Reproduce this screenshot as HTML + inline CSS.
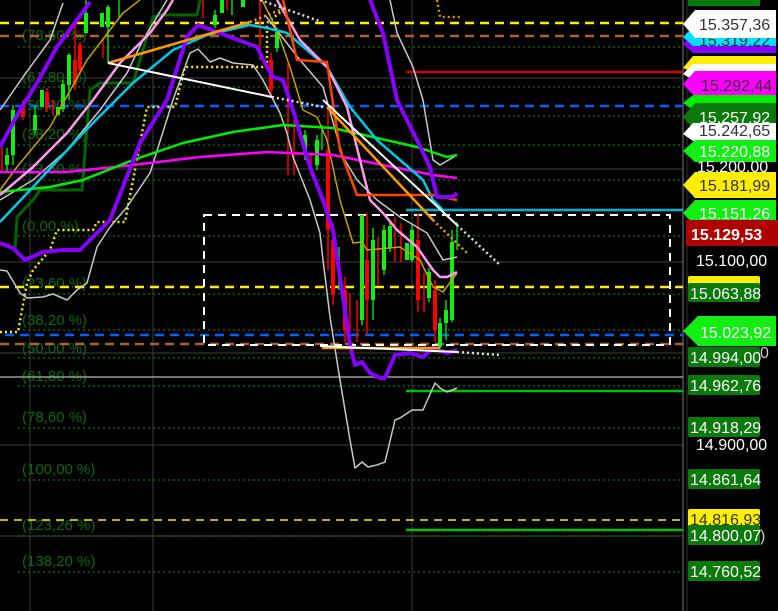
<!DOCTYPE html>
<html><head><meta charset="utf-8"><style>
html,body{margin:0;padding:0;background:#000;}
svg{display:block;font-family:"Liberation Sans",sans-serif;}
</style></head><body>
<svg width="778" height="611" viewBox="0 0 778 611" xmlns="http://www.w3.org/2000/svg">
<rect width="778" height="611" fill="#000"/>
<g stroke="#333" stroke-width="1.2">
<line x1="30" y1="0" x2="30" y2="611"/><line x1="153" y1="0" x2="153" y2="611"/><line x1="412" y1="0" x2="412" y2="611"/>
<line x1="0" y1="78" x2="683" y2="78"/><line x1="0" y1="169" x2="683" y2="169"/><line x1="0" y1="262" x2="683" y2="262"/>
<line x1="0" y1="353" x2="683" y2="353"/><line x1="0" y1="445" x2="683" y2="445"/><line x1="0" y1="536" x2="683" y2="536"/>
</g>
<line x1="683" y1="0" x2="683" y2="611" stroke="#555" stroke-width="1.5"/>
<line x1="687" y1="0" x2="687" y2="611" stroke="#333" stroke-width="1"/>
<g stroke="#0a7a0a" stroke-width="1.2" stroke-dasharray="2,3">
<line x1="18" y1="47" x2="683" y2="47"/><line x1="18" y1="87" x2="683" y2="87"/><line x1="18" y1="116" x2="683" y2="116"/>
<line x1="18" y1="145" x2="683" y2="145"/><line x1="18" y1="180" x2="683" y2="180"/><line x1="18" y1="236" x2="683" y2="236"/>
<line x1="18" y1="294" x2="683" y2="294"/><line x1="18" y1="330" x2="683" y2="330"/><line x1="18" y1="358" x2="683" y2="358"/>
<line x1="18" y1="386" x2="683" y2="386"/><line x1="18" y1="428" x2="683" y2="428"/><line x1="18" y1="480" x2="683" y2="480"/>
<line x1="18" y1="536" x2="683" y2="536"/><line x1="18" y1="572" x2="683" y2="572"/>
</g>
<g fill="#0b6a0b" font-size="15">
<text x="22" y="40">(78,60 %)</text><text x="22" y="82">(61,80 %)</text><text x="22" y="110">(50,00 %)</text>
<text x="22" y="139">(38,20 %)</text><text x="22" y="174">(23,60 %)</text><text x="22" y="231">(0,00 %)</text>
<text x="22" y="288">(23,60 %)</text><text x="22" y="325">(38,20 %)</text><text x="22" y="353">(50,00 %)</text>
<text x="22" y="381">(61,80 %)</text><text x="22" y="422">(78,60 %)</text><text x="22" y="474">(100,00 %)</text>
<text x="22" y="530">(123,26 %)</text><text x="22" y="566">(138,20 %)</text>
</g>
<g stroke-width="2.5" stroke-dasharray="9,6">
<line x1="0" y1="23" x2="683" y2="23" stroke="#ffee00"/>
<line x1="0" y1="36" x2="683" y2="36" stroke="#b0602a"/>
<line x1="0" y1="106" x2="683" y2="106" stroke="#0060ff"/>
<line x1="0" y1="287" x2="683" y2="287" stroke="#ffee00"/>
<line x1="5" y1="335" x2="683" y2="335" stroke="#0060ff"/>
<line x1="0" y1="344" x2="683" y2="344" stroke="#b0602a"/>
</g>
<line x1="0" y1="520" x2="683" y2="520" stroke="#ffee00" stroke-width="1.5" stroke-dasharray="8,6"/>
<line x1="406" y1="72" x2="683" y2="72" stroke="#d00000" stroke-width="2.5"/>
<line x1="0" y1="377" x2="683" y2="377" stroke="#999" stroke-width="1.5"/>
<line x1="406" y1="210" x2="683" y2="210" stroke="#00b0d0" stroke-width="2.5"/>
<line x1="406" y1="391" x2="683" y2="391" stroke="#00c000" stroke-width="2.5"/>
<line x1="406" y1="530" x2="683" y2="530" stroke="#00c000" stroke-width="2.5"/>
<rect x="204" y="215" width="466" height="130" fill="none" stroke="#fff" stroke-width="2" stroke-dasharray="8,6"/>
<g stroke-width="1.5">
<g stroke="#ff0000" fill="#ff0000">
<line x1="2" y1="148" x2="2" y2="172"/><line x1="23" y1="100" x2="23" y2="120"/><line x1="47" y1="88" x2="47" y2="112"/><line x1="53" y1="100" x2="53" y2="115"/>
<line x1="75" y1="20" x2="75" y2="90"/><line x1="80" y1="42" x2="80" y2="75"/><line x1="103" y1="38" x2="103" y2="58"/>
<line x1="203" y1="0" x2="203" y2="18"/><line x1="227" y1="0" x2="227" y2="10"/><line x1="260" y1="0" x2="260" y2="60"/>
<line x1="271" y1="53" x2="271" y2="97"/><line x1="288" y1="63" x2="288" y2="175"/><line x1="294" y1="120" x2="294" y2="175"/><line x1="311" y1="153" x2="311" y2="175"/>
<line x1="328" y1="107" x2="328" y2="270"/><line x1="333" y1="223" x2="333" y2="305"/><line x1="345" y1="277" x2="345" y2="342"/><line x1="350" y1="293" x2="350" y2="332"/>
<line x1="357" y1="300" x2="357" y2="342"/><line x1="367" y1="213" x2="367" y2="335"/><line x1="378" y1="237" x2="378" y2="285"/><line x1="395" y1="217" x2="395" y2="262"/>
<line x1="401" y1="223" x2="401" y2="262"/><line x1="418" y1="213" x2="418" y2="312"/><line x1="424" y1="273" x2="424" y2="312"/><line x1="435" y1="280" x2="435" y2="342"/>
</g>
<g fill="#ff0000">
<rect x="21" y="105" width="4" height="12"/><rect x="45" y="92" width="4" height="16"/><rect x="73" y="60" width="4" height="25"/><rect x="78" y="45" width="4" height="25"/>
<rect x="269" y="60" width="4" height="30"/><rect x="326" y="150" width="4" height="80"/><rect x="331" y="240" width="4" height="55"/><rect x="343" y="290" width="4" height="40"/>
<rect x="365" y="260" width="4" height="40"/><rect x="416" y="240" width="4" height="60"/><rect x="433" y="290" width="4" height="40"/>
</g>
<g stroke="#00dd00">
<line x1="7" y1="148" x2="7" y2="172"/><line x1="13" y1="105" x2="13" y2="165"/><line x1="35" y1="105" x2="35" y2="135"/><line x1="63" y1="80" x2="63" y2="112"/>
<line x1="69" y1="53" x2="69" y2="100"/><line x1="86" y1="0" x2="86" y2="33"/><line x1="108" y1="5" x2="108" y2="63"/><line x1="119" y1="0" x2="119" y2="17"/>
<line x1="215" y1="10" x2="215" y2="28"/><line x1="232" y1="0" x2="232" y2="15"/><line x1="277" y1="28" x2="277" y2="52"/><line x1="305" y1="130" x2="305" y2="160"/>
<line x1="317" y1="135" x2="317" y2="170"/><line x1="322" y1="125" x2="322" y2="150"/><line x1="339" y1="247" x2="339" y2="290"/><line x1="362" y1="215" x2="362" y2="325"/>
<line x1="373" y1="228" x2="373" y2="320"/><line x1="384" y1="225" x2="384" y2="275"/><line x1="390" y1="222" x2="390" y2="252"/><line x1="412" y1="225" x2="412" y2="262"/>
<line x1="429" y1="268" x2="429" y2="302"/><line x1="440" y1="318" x2="440" y2="350"/><line x1="446" y1="300" x2="446" y2="340"/><line x1="452" y1="230" x2="452" y2="322"/><line x1="457" y1="222" x2="457" y2="250"/>
</g>
<g fill="#11ee11">
<rect x="5" y="155" width="4" height="10"/><rect x="11" y="110" width="4" height="45"/><rect x="33" y="115" width="4" height="15"/><rect x="40" y="90" width="4" height="17"/>
<rect x="56" y="107" width="4" height="8"/><rect x="61" y="84" width="4" height="25"/><rect x="67" y="55" width="4" height="30"/><rect x="84" y="13" width="4" height="20"/>
<rect x="100" y="13" width="4" height="14"/><rect x="106" y="7" width="4" height="20"/><rect x="213" y="15" width="4" height="10"/><rect x="220" y="0" width="4" height="13"/>
<rect x="241" y="0" width="4" height="7"/><rect x="275" y="32" width="4" height="16"/><rect x="303" y="135" width="4" height="20"/><rect x="315" y="140" width="4" height="25"/>
<rect x="360" y="215" width="4" height="105"/><rect x="371" y="240" width="4" height="60"/><rect x="382" y="230" width="4" height="40"/><rect x="388" y="226" width="4" height="22"/>
<rect x="405" y="243" width="4" height="17"/><rect x="410" y="230" width="4" height="30"/><rect x="427" y="272" width="4" height="26"/><rect x="438" y="323" width="4" height="24"/>
<rect x="444" y="310" width="4" height="13"/><rect x="450" y="242" width="4" height="78"/>
</g>
</g>
<g fill="none" stroke-linejoin="round">
<polyline stroke="#006600" stroke-width="3" points="15,250 17,217 33,200 40,190 82,190 90,90 100,83 133,83 153,17 160,15 197,15 200,0"/>
<polyline stroke="#ffee00" stroke-width="2.5" stroke-dasharray="2,3" points="0,332 18,332 27,283 33,270 50,250 57,230 93,230 97,222 125,222 147,107 175,107 185,67 267,67 267,23 283,10"/>
<polyline stroke="#e09000" stroke-width="2.5" stroke-dasharray="2,3" points="437,0 440,17 460,17"/>
<polyline stroke="#c8c8c8" stroke-width="1.5" points="0,110 23,77 50,40 63,3"/>
<polyline stroke="#c8c8c8" stroke-width="1.5" points="0,200 33,180 67,150 100,110 127,73 143,40 167,0"/>
<polyline stroke="#c8c8c8" stroke-width="1.5" points="0,270 7,271 20,293 27,298 43,297 53,294 67,300 77,290 87,283 97,247 110,227 127,207 150,173 173,100 190,53 198,49 210,62 220,58 233,63 253,65 263,80 280,113 287,133 293,157 310,200 320,233 323,260 330,317 340,380 350,440 355,468 362,462 368,467 377,465 385,462 395,420 400,418 412,410 423,410 435,383 440,388 447,392 457,388"/>
<polyline stroke="#c8c8c8" stroke-width="1.5" points="390,0 397,33 413,67 423,100 433,160 440,165 457,155"/>
<polyline stroke="#c8c8c8" stroke-width="1.5" points="265,15 300,60 323,87 343,157 357,180 377,200 400,217 427,233 443,260 457,257"/>
<polyline stroke="#c8a000" stroke-width="1.5" points="0,190 17,167 50,127 87,60 123,13 140,0"/>
<polyline stroke="#c8a000" stroke-width="1.5" points="262,0 277,30 290,67 303,110 317,117 327,140 340,200 353,243 362,242 367,250 400,247 420,260 433,287 443,292 457,273"/>
<polyline stroke="#ff00ff" stroke-width="2.5" points="0,172 67,172 133,165 200,157 267,152 333,155 383,165 433,175 457,178"/>
<polyline stroke="#00ee00" stroke-width="2.5" points="0,192 50,187 83,180 133,160 183,143 233,132 283,125 333,128 377,138 417,147 447,157 457,155"/>
<polyline stroke="#00c8e8" stroke-width="2.5" points="0,222 33,187 83,133 133,83 173,50 207,35 250,25 267,28 287,33 307,50 327,67 350,107 377,140 400,160 423,180 433,200 443,210"/>
<polyline stroke="#ff99ee" stroke-width="2.5" points="0,195 33,167 67,133 93,100 120,63 150,33 167,10 173,0"/>
<polyline stroke="#ff99ee" stroke-width="2.5" points="277,0 300,40 327,67 347,107 360,160 370,200 383,213 397,230 417,247 433,270 440,277 447,277 457,272"/>
<polyline stroke="#ff4400" stroke-width="2.5" points="283,0 297,60 327,62 330,83 340,150 357,195 433,195 457,200"/>
<polyline stroke="#8800ff" stroke-width="4" points="0,147 20,110 37,83 57,47 77,20 90,2"/>
<polyline stroke="#8800ff" stroke-width="4" points="0,243 13,248 25,260 43,252 63,250 80,250 110,220 140,143 167,100 187,37 198,25 233,38 257,47 267,67 273,77 283,80 293,110 310,167 323,200 333,230 343,297 350,345 355,365 362,362 370,373 380,378 385,378 395,355 410,353 423,357 433,348 447,353 457,350"/>
<polyline stroke="#8800ff" stroke-width="4" points="370,0 383,33 397,100 417,140 430,167 437,197 453,197 457,193"/>
<line x1="108" y1="63" x2="250" y2="22" stroke="#ff9900" stroke-width="2.5"/>
<line x1="250" y1="22" x2="285" y2="8" stroke="#ff9900" stroke-width="2.5" stroke-dasharray="2,3"/>
<line x1="327" y1="107" x2="433" y2="220" stroke="#ff9900" stroke-width="2.5"/>
<line x1="433" y1="220" x2="467" y2="253" stroke="#ff9900" stroke-width="2.5" stroke-dasharray="2,3"/>
<line x1="322" y1="348" x2="440" y2="348" stroke="#ff9900" stroke-width="2.5"/>
<line x1="108" y1="63" x2="272" y2="97" stroke="#fff" stroke-width="2"/>
<line x1="272" y1="97" x2="323" y2="107" stroke="#ddd" stroke-width="2.5" stroke-dasharray="2,3"/>
<line x1="323" y1="100" x2="457" y2="225" stroke="#fff" stroke-width="2"/>
<line x1="457" y1="225" x2="500" y2="265" stroke="#ddd" stroke-width="2.5" stroke-dasharray="2,3"/>
<line x1="320" y1="346" x2="457" y2="352" stroke="#fff" stroke-width="2"/>
<line x1="457" y1="352" x2="500" y2="355" stroke="#ddd" stroke-width="2.5" stroke-dasharray="2,3"/>
<line x1="260" y1="0" x2="322" y2="22" stroke="#ddd" stroke-width="2.5" stroke-dasharray="2,3"/>
</g>
<g font-size="16">
<rect x="688" y="-8" width="72" height="14" fill="#0a7a0a"/>
<polygon points="683,44 693,34 776,34 776,53 693,53" fill="#8800ff"/>
<polygon points="683,37 693,27 776,27 776,46 693,46" fill="#00e0ff"/>
<text x="699" y="46" fill="#333">15.319,22</text>
<polygon points="683,24 695,10 776,10 776,38 695,38" fill="#fff"/>
<text x="699" y="30" fill="#333">15.357,36</text>
<polygon points="683,68 693,56 776,56 776,72 693,72" fill="#ffee00"/>
<polygon points="683,74 693,64 776,64 776,80 693,80" fill="#fff"/>
<polygon points="683,84 695,71 776,71 776,97 695,97" fill="#ff00ff"/>
<text x="701" y="91" fill="#333">15.292,44</text>
<polygon points="683,103 693,95 776,95 776,110 693,110" fill="#00ee00"/>
<polygon points="683,117 695,103 776,103 776,131 695,131" fill="#0a7a0a"/>
<text x="699" y="123" fill="#fff">15.257,92</text>
<polygon points="683,134 693,123 776,123 776,141 693,141" fill="#fff"/>
<text x="699" y="136" fill="#333">15.242,65</text>
<polygon points="683,151 695,140 776,140 776,162 695,162" fill="#11ee11"/>
<text x="699" y="157" fill="#fff">15.220,88</text>
<text x="697" y="172" fill="#fff">15.200,00</text>
<polygon points="683,185 695,172 776,172 776,198 695,198" fill="#ffee00"/>
<text x="699" y="191" fill="#333">15.181,99</text>
<polygon points="683,213 695,200 776,200 776,226 695,226" fill="#11ee11"/>
<text x="699" y="219" fill="#fff">15.151,26</text>
<rect x="686" y="220" width="92" height="26" fill="#b00000"/>
<text x="691" y="240" fill="#fff" font-weight="bold" font-size="16">15.129,53</text>
<text x="696" y="266" fill="#fff">15.100,00</text>
<rect x="688" y="276" width="72" height="14" rx="2" fill="#ffee00"/>
<rect x="688" y="283" width="72" height="19" rx="2" fill="#0a7a0a"/>
<text x="690" y="299" fill="#fff">15.063,88</text>
<polygon points="683,331 698,316 776,316 776,346 698,346" fill="#11ee11"/>
<text x="700" y="338" fill="#fff">15.023,92</text>
<text x="760" y="358" fill="#ccc">0</text>
<rect x="688" y="347" width="72" height="20" rx="2" fill="#0a7a0a"/>
<text x="690" y="363" fill="#fff">14.994,00</text>
<rect x="688" y="375" width="72" height="20" rx="2" fill="#0a7a0a"/>
<text x="690" y="391" fill="#fff">14.962,76</text>
<rect x="688" y="417" width="72" height="20" rx="2" fill="#0a7a0a"/>
<text x="690" y="433" fill="#fff">14.918,29</text>
<text x="696" y="450" fill="#fff">14.900,00</text>
<rect x="688" y="469" width="72" height="20" rx="2" fill="#0a7a0a"/>
<text x="690" y="485" fill="#fff">14.861,64</text>
<rect x="688" y="509" width="72" height="18" rx="2" fill="#ffee00"/>
<text x="690" y="525" fill="#333">14.816,93</text>
<text x="760" y="541" fill="#ccc">)</text>
<rect x="688" y="525" width="72" height="20" rx="2" fill="#0a7a0a"/>
<text x="690" y="541" fill="#fff">14.800,07</text>
<rect x="688" y="561" width="72" height="20" rx="2" fill="#0a7a0a"/>
<text x="690" y="577" fill="#fff">14.760,52</text>
</g>
</svg>
</body></html>
